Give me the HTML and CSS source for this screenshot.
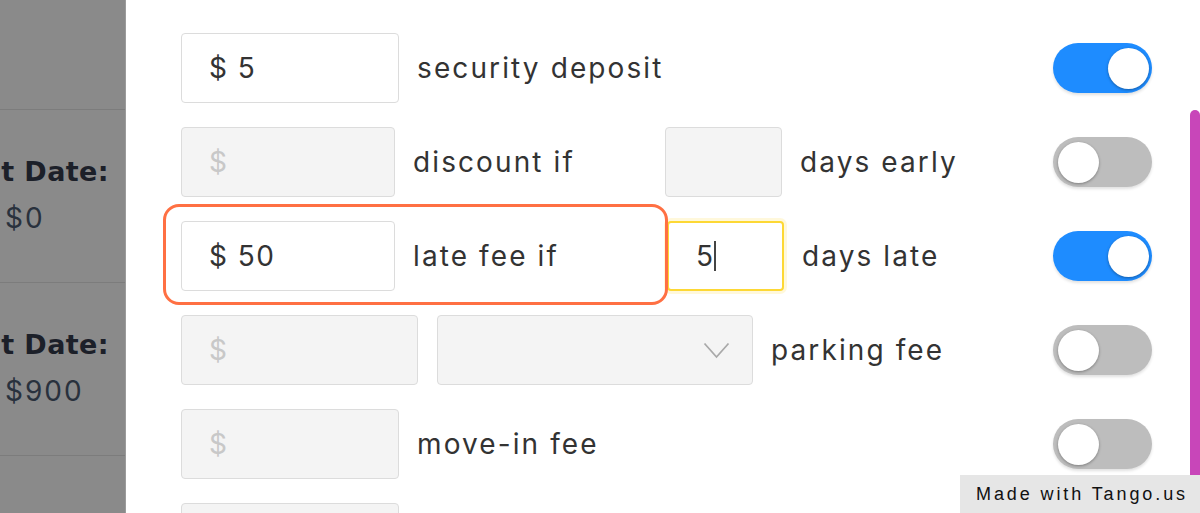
FILE: index.html
```html
<!DOCTYPE html>
<html lang="en">
<head>
<meta charset="utf-8">
<title>Fees</title>
<link rel="stylesheet" href="styles.css">
</head>
<body>
<div class="screen">
  <aside class="side">
    <div class="side-top"></div>
    <div class="side-sec">
      <div class="side-label"><span>Rent Date:</span></div>
      <div class="side-val">$0</div>
    </div>
    <div class="side-sec">
      <div class="side-label"><span>Rent Date:</span></div>
      <div class="side-val">$900</div>
    </div>
    <div class="side-sec"></div>
  </aside>
  <main class="modal">
    <div class="form">
      <div class="row">
        <div class="field amount">$ 5</div>
        <div class="label">security deposit</div>
        <div class="toggle on"><span class="knob"></span></div>
      </div>
      <div class="row">
        <div class="field amount-sm off">$</div>
        <div class="label cond">discount if</div>
        <div class="field days off"></div>
        <div class="label">days early</div>
        <div class="toggle"><span class="knob"></span></div>
      </div>
      <div class="row">
        <div class="field amount-sm">$ 50</div>
        <div class="label cond">late fee if</div>
        <div class="field days focus">5<span class="caret"></span></div>
        <div class="label">days late</div>
        <div class="toggle on"><span class="knob"></span></div>
        <div class="ring"></div>
      </div>
      <div class="row">
        <div class="field amount-lg off">$</div>
        <div class="field select off">
          <svg class="chev" width="27" height="17" viewBox="0 0 27 17"><polyline points="1.5,1.5 13.5,15 25.5,1.5" fill="none" stroke="#a9a9a9" stroke-width="1.8"/></svg>
        </div>
        <div class="label">parking fee</div>
        <div class="toggle"><span class="knob"></span></div>
      </div>
      <div class="row">
        <div class="field amount off">$</div>
        <div class="label">move-in fee</div>
        <div class="toggle"><span class="knob"></span></div>
      </div>
      <div class="row">
        <div class="field amount off"></div>
      </div>
    </div>
    <div class="scroll"><div class="thumb"></div></div>
  </main>
</div>
<div class="tango">Made with Tango.us</div>
</body>
</html>
```

FILE: styles.css
```css
* { box-sizing: border-box; }
html, body { margin: 0; padding: 0; }
body {
  width: 1200px;
  height: 513px;
  overflow: hidden;
  position: relative;
  background: #fff;
  font-family: "Inter", "Noto Sans", sans-serif;
}
.screen { display: flex; height: 513px; }

/* dimmed side panel */
.side {
  width: 126px;
  flex: none;
  background: #8a8a8a;
  border-right: 1px solid #9c9c9c;
  overflow: hidden;
  display: flex;
  flex-direction: column;
}
.side-top { height: 110px; flex: none; border-bottom: 1px solid #7c7c7c; }
.side-sec {
  height: 173px;
  flex: none;
  border-bottom: 1px solid #7c7c7c;
  padding-top: 47px;
}
.side-label {
  width: 109px;
  display: flex;
  justify-content: flex-end;
  white-space: nowrap;
  font-family: "DejaVu Sans", sans-serif;
  font-weight: 700;
  font-size: 27px;
  letter-spacing: 0.4px;
  color: #1c2029;
  line-height: 30px;
}
.side-val {
  padding-left: 5px;
  margin-top: 16px;
  font-size: 28px;
  letter-spacing: 2px;
  color: #29313d;
  line-height: 30px;
}

/* modal */
.modal { flex: 1; display: flex; min-width: 0; }
.form {
  flex: 1;
  padding: 33px 36px 0 55px;
  display: flex;
  flex-direction: column;
  gap: 24px;
}
.row {
  display: flex;
  align-items: center;
  height: 70px;
  flex: none;
  position: relative;
}
.field {
  height: 70px;
  flex: none;
  border: 1.5px solid #dcdcdc;
  border-radius: 4px;
  padding-left: 27px;
  display: flex;
  align-items: center;
  font-size: 28px;
  letter-spacing: 1.5px;
  color: #333;
  background: #fff;
}
.field.off { background: #f4f4f4; color: #c8c8c8; }
.amount { width: 218px; }
.amount-sm { width: 214px; }
.amount-lg { width: 237px; }
.days { width: 117px; }
.select {
  width: 316px;
  margin-left: 19px;
  justify-content: flex-end;
  padding-right: 22px;
}
.field.focus {
  border: 2px solid #fdd835;
  box-shadow: 0 0 0 3px rgba(253, 216, 53, 0.18);
  margin-left: 2px;
}
.caret {
  display: inline-block;
  width: 2px;
  height: 30px;
  background: #444;
  margin-left: -1px;
}
.label {
  margin-left: 18px;
  font-size: 28px;
  letter-spacing: 2.1px;
  color: #333;
  white-space: nowrap;
}
.label.cond { width: 234px; margin-right: 18px; }
.toggle {
  margin-left: auto;
  width: 99px;
  height: 50px;
  flex: none;
  border-radius: 25px;
  background: #bdbdbd;
  display: flex;
  align-items: center;
  padding: 0 5px;
  box-shadow: 0 2px 3px rgba(0, 0, 0, 0.12);
}
.toggle.on { background: #1e8cff; justify-content: flex-end; padding: 0 3px; }
.knob {
  width: 41px;
  height: 41px;
  border-radius: 50%;
  background: #fff;
  box-shadow: 0 1px 3px rgba(0, 0, 0, 0.35);
}
.ring {
  position: absolute;
  left: -18px;
  top: -17px;
  width: 505px;
  height: 101px;
  border: 3px solid #ff7043;
  border-radius: 16px;
  pointer-events: none;
}

/* scrollbar */
.scroll {
  width: 12px;
  flex: none;
  display: flex;
  flex-direction: column;
  padding: 110px 0 0 2px;
}
.thumb { flex: 1; background: #c846b9; border-radius: 5px 5px 0 0; }

/* watermark */
.tango {
  position: absolute;
  right: 0;
  bottom: 0;
  width: 240px;
  height: 38px;
  background: #e6e6e6;
  display: flex;
  align-items: center;
  padding-left: 16px;
  font-family: "Liberation Sans", Arial, sans-serif;
  font-size: 18px;
  letter-spacing: 2.9px;
  color: #111;
}
```
